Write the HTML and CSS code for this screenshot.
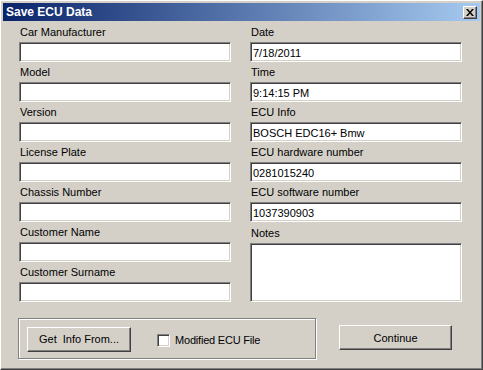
FILE: index.html
```
<!DOCTYPE html>
<html lang="en">
<head>
    <meta charset="UTF-8">
    <title>Save ECU Data</title>
    <link rel="stylesheet" href="styles.css">
</head>
<body>
    <div class="window">
        <div class="titlebar">
            <span class="title">Save ECU Data</span>
            <button class="close" type="button">
                <svg width="8" height="7" viewBox="0 0 8 7">
                    <path d="M0 0h2l2 2.5L6 0h2L5 3.5 8 7H6L4 4.5 2 7H0l3-3.5z" fill="#000"/>
                </svg>
            </button>
        </div>

        <form class="form">
            <div class="col">
                <label>Car Manufacturer</label>
                <input type="text">
                <label>Model</label>
                <input type="text">
                <label>Version</label>
                <input type="text">
                <label>License Plate</label>
                <input type="text">
                <label>Chassis Number</label>
                <input type="text">
                <label>Customer Name</label>
                <input type="text">
                <label>Customer Surname</label>
                <input type="text">
            </div>
            <div class="col">
                <label>Date</label>
                <input type="text" value="7/18/2011">
                <label>Time</label>
                <input type="text" value="9:14:15 PM">
                <label>ECU Info</label>
                <input type="text" value="BOSCH EDC16+ Bmw">
                <label>ECU hardware number</label>
                <input type="text" value="0281015240">
                <label>ECU software number</label>
                <input type="text" value="1037390903">
                <label class="notes-label">Notes</label>
                <textarea></textarea>
            </div>
        </form>

        <div class="actions">
            <div class="group">
                <button class="btn get-info" type="button">Get  Info From...</button>
                <label class="check"><span class="box"></span>Modified ECU File</label>
            </div>
            <button class="btn continue" type="button">Continue</button>
        </div>
    </div>
</body>
</html>
```

FILE: styles.css
```
html, body {
    margin: 0;
    padding: 0;
}
body {
    width: 483px;
    height: 370px;
    font-family: "Liberation Sans", Arial, sans-serif;
    font-size: 11px;
    color: #000;
    background: #d4d0c8;
}
.window {
    box-sizing: border-box;
    width: 483px;
    height: 370px;
    padding: 2px;
    background: #d4d0c8;
    border-top: 1px solid #ffffff;
    border-left: 1px solid #ffffff;
    border-right: 1px solid #404040;
    border-bottom: 1px solid #404040;
    box-shadow: inset -1px -1px 0 #808080;
}
.titlebar {
    height: 18px;
    display: flex;
    align-items: center;
    justify-content: space-between;
    padding: 0 2px 0 2px;
    background: linear-gradient(to right, #0a246a, #a6caf0);
}
.title {
    color: #fff;
    font-weight: bold;
    font-size: 12px;
    padding-left: 1px;
}
.close {
    box-sizing: border-box;
    width: 14px;
    height: 13px;
    margin-right: 1px;
    padding: 0;
    display: flex;
    align-items: center;
    justify-content: center;
    background: #d4d0c8;
    border-top: 1px solid #fff;
    border-left: 1px solid #fff;
    border-right: 1px solid #404040;
    border-bottom: 1px solid #404040;
    box-shadow: inset -1px -1px 0 #808080;
}
.form {
    display: grid;
    grid-template-columns: 212px 212px;
    column-gap: 19px;
    padding: 1px 0 0 16px;
    margin: 0;
}
.col {
    display: flex;
    flex-direction: column;
}
.col label {
    height: 20px;
    line-height: 20px;
    padding-left: 1px;
}
.col .notes-label {
    height: 21px;
    line-height: 22px;
}
input[type="text"],
textarea {
    box-sizing: border-box;
    width: 212px;
    height: 20px;
    margin: 0;
    padding: 1px 2px 0;
    font-family: "Liberation Sans", Arial, sans-serif;
    font-size: 11px;
    color: #000;
    background: #fff;
    border-top: 1px solid #808080;
    border-left: 1px solid #808080;
    border-right: 1px solid #fff;
    border-bottom: 1px solid #fff;
    box-shadow: inset 1px 1px 0 #404040, inset -1px -1px 0 #d4d0c8;
    outline: none;
}
textarea {
    height: 59px;
    resize: none;
}
.actions {
    display: flex;
    align-items: flex-start;
    margin-top: 16px;
    padding-left: 15px;
}
.group {
    box-sizing: border-box;
    width: 298px;
    height: 41px;
    display: flex;
    align-items: center;
    padding-left: 8px;
    border: 1px solid #808080;
    box-shadow: inset 1px 1px 0 #fff, 1px 1px 0 #fff;
}
.btn {
    box-sizing: border-box;
    height: 25px;
    padding: 0;
    font-family: "Liberation Sans", Arial, sans-serif;
    font-size: 11px;
    color: #000;
    white-space: pre;
    background: #d4d0c8;
    border-top: 1px solid #fff;
    border-left: 1px solid #fff;
    border-right: 1px solid #404040;
    border-bottom: 1px solid #404040;
    box-shadow: inset -1px -1px 0 #808080;
}
.get-info {
    width: 104px;
    margin-top: 1px;
}
.check {
    display: flex;
    align-items: center;
    margin-left: 26px;
    margin-top: 3px;
    letter-spacing: -0.2px;
}
.box {
    box-sizing: border-box;
    width: 13px;
    height: 13px;
    margin-right: 5px;
    background: #fff;
    border-top: 1px solid #808080;
    border-left: 1px solid #808080;
    border-right: 1px solid #fff;
    border-bottom: 1px solid #fff;
    box-shadow: inset 1px 1px 0 #404040, inset -1px -1px 0 #d4d0c8;
}
.continue {
    width: 113px;
    margin-left: 23px;
    margin-top: 7px;
}
```
